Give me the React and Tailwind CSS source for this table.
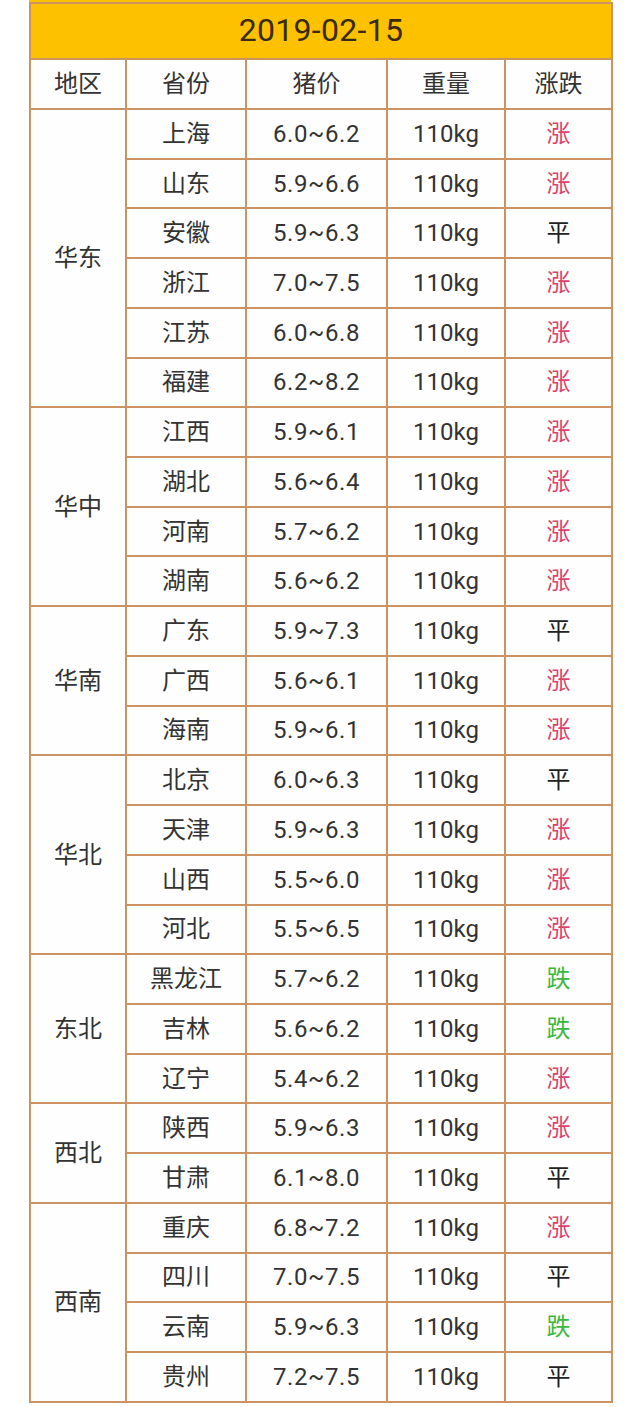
import React from "react";

const groups = [
  {
    region: "华东",
    rows: [
      ["上海", "6.0~6.2", "涨"],
      ["山东", "5.9~6.6", "涨"],
      ["安徽", "5.9~6.3", "平"],
      ["浙江", "7.0~7.5", "涨"],
      ["江苏", "6.0~6.8", "涨"],
      ["福建", "6.2~8.2", "涨"],
    ],
  },
  {
    region: "华中",
    rows: [
      ["江西", "5.9~6.1", "涨"],
      ["湖北", "5.6~6.4", "涨"],
      ["河南", "5.7~6.2", "涨"],
      ["湖南", "5.6~6.2", "涨"],
    ],
  },
  {
    region: "华南",
    rows: [
      ["广东", "5.9~7.3", "平"],
      ["广西", "5.6~6.1", "涨"],
      ["海南", "5.9~6.1", "涨"],
    ],
  },
  {
    region: "华北",
    rows: [
      ["北京", "6.0~6.3", "平"],
      ["天津", "5.9~6.3", "涨"],
      ["山西", "5.5~6.0", "涨"],
      ["河北", "5.5~6.5", "涨"],
    ],
  },
  {
    region: "东北",
    rows: [
      ["黑龙江", "5.7~6.2", "跌"],
      ["吉林", "5.6~6.2", "跌"],
      ["辽宁", "5.4~6.2", "涨"],
    ],
  },
  {
    region: "西北",
    rows: [
      ["陕西", "5.9~6.3", "涨"],
      ["甘肃", "6.1~8.0", "平"],
    ],
  },
  {
    region: "西南",
    rows: [
      ["重庆", "6.8~7.2", "涨"],
      ["四川", "7.0~7.5", "平"],
      ["云南", "5.9~6.3", "跌"],
      ["贵州", "7.2~7.5", "平"],
    ],
  },
];

// colour for the last column
const trendColor = (t) =>
  t === "涨" ? "text-[#d9436d]" : t === "跌" ? "text-[#3cb83c]" : "text-[#222]";

const cell = "border-2 border-[#cc9262] text-center align-middle h-[49.73px] p-0";

export default function App() {
  return (
    <div
      className="w-[640px] min-h-[1407px] bg-white text-[24px] leading-none text-[#333]"
      style={{ fontFamily: '"Roboto", "Noto Sans CJK SC", sans-serif' }}
    >
      <div className="mx-[29px] h-[2px] bg-[#fdc100]" />
      <table className="ml-[29px] w-[582px] table-fixed border-collapse">
        <colgroup>
          <col className="w-[96px]" />
          <col className="w-[120px]" />
          <col className="w-[141px]" />
          <col className="w-[118px]" />
          <col className="w-[107px]" />
        </colgroup>
        <thead>
          <tr>
            <th
              colSpan={5}
              className="border-2 border-[#cc9262] bg-[#fdc100] h-[56px] p-0 pb-[3px] text-[32px] font-normal text-[#3a2b12] tracking-[0.3px]"
            >
              2019-02-15
            </th>
          </tr>
          <tr className="bg-[#fefefe]">
            {["地区", "省份", "猪价", "重量", "涨跌"].map((h) => (
              <th key={h} className={`${cell} h-[50px] font-normal`}>
                {h}
              </th>
            ))}
          </tr>
        </thead>
        <tbody className="bg-[#fefefe]">
          {groups.map((g) =>
            g.rows.map((r, i) => (
              <tr key={r[0]}>
                {i === 0 && (
                  <td rowSpan={g.rows.length} className={cell}>
                    {g.region}
                  </td>
                )}
                <td className={cell}>{r[0]}</td>
                <td className={`${cell} tracking-[0.6px]`}>{r[1]}</td>
                <td className={cell}>110kg</td>
                <td className={`${cell} ${trendColor(r[2])}`}>{r[2]}</td>
              </tr>
            ))
          )}
        </tbody>
      </table>
    </div>
  );
}
